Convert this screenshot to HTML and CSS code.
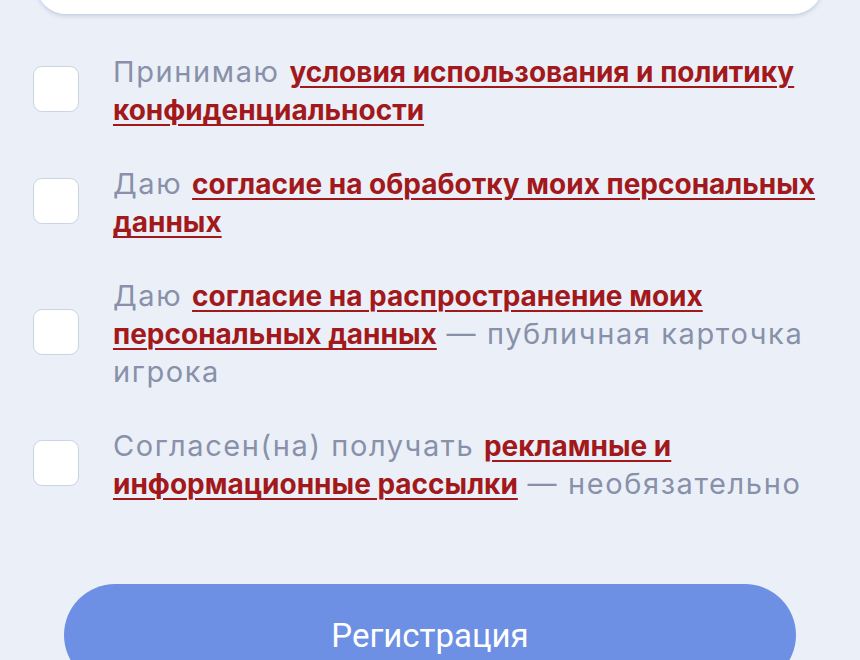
FILE: index.html
```html
<!DOCTYPE html>
<html lang="ru">
<head>
  <meta charset="UTF-8">
  <meta name="viewport" content="width=device-width, initial-scale=1.0">
  <title>Регистрация</title>
  <link rel="stylesheet" href="styles.css">
</head>
<body>
  <div class="form">
    <div class="field-card"></div>

    <div class="agreements">
      <label class="agree-row">
        <input type="checkbox" class="agree-box">
        <span class="agree-text">Принимаю <a href="#">условия использования и политику конфиденциальности</a></span>
      </label>
      <label class="agree-row">
        <input type="checkbox" class="agree-box">
        <span class="agree-text">Даю <a href="#">согласие на обработку моих персональных данных</a></span>
      </label>
      <label class="agree-row">
        <input type="checkbox" class="agree-box">
        <span class="agree-text">Даю <a href="#">согласие на распространение моих персональных данных</a> — публичная карточка игрока</span>
      </label>
      <label class="agree-row">
        <input type="checkbox" class="agree-box">
        <span class="agree-text">Согласен(на) получать <a href="#">рекламные и информационные рассылки</a> — необязательно</span>
      </label>
    </div>

    <button class="submit" type="button">Регистрация</button>
  </div>
</body>
</html>
```

FILE: styles.css
```css
html, body {
  height: 100%;
}

body {
  margin: 0;
  background-color: #ebf0f8;
  font-family: Inter, "Noto Sans", sans-serif;
  overflow: hidden;
}

.form {
  padding: 0 34px 0 33px;
}

.field-card {
  height: 60px;
  margin: -46px 3px 0 3px;
  background-color: #fff;
  border-radius: 30px;
  box-shadow: 0 2px 4px rgba(120, 140, 180, 0.35);
}

.agreements {
  display: flex;
  flex-direction: column;
  gap: 36px;
  margin-top: 39px;
}

.agree-row {
  display: flex;
  align-items: center;
  gap: 34px;
  cursor: pointer;
}

.agree-box {
  appearance: none;
  -webkit-appearance: none;
  flex-shrink: 0;
  width: 46px;
  height: 46px;
  margin: 0 0 4px 0;
  background-color: #fff;
  border: 1.5px solid #cbd4e3;
  border-radius: 9px;
  box-sizing: border-box;
}

.agree-text {
  font-size: 29px;
  line-height: 38px;
  letter-spacing: 1.6px;
  color: #8891a9;
}

.agree-text a {
  color: #a2191c;
  font-size: 28px;
  font-weight: 700;
  letter-spacing: 0;
  text-decoration: underline;
  text-decoration-thickness: 2px;
  text-underline-offset: 4px;
}

.submit {
  display: block;
  width: 732px;
  height: 102px;
  margin: 81px 0 0 31px;
  background-color: #6d90e4;
  color: #fff;
  border: none;
  border-radius: 51px;
  font-family: Roboto, Inter, sans-serif;
  font-size: 33px;
  cursor: pointer;
}
```
